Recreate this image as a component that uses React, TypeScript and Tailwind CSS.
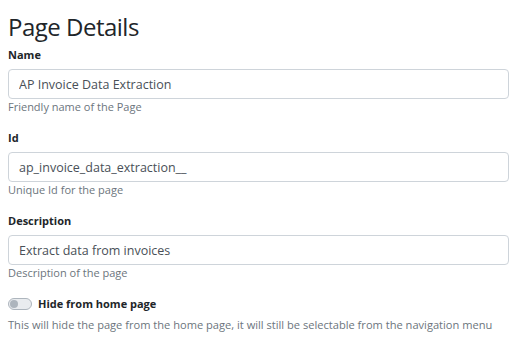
import { useState } from "react";

const FONT = "font-['Open_Sans','Noto_Sans',sans-serif]";

interface FieldProps {
  label: string;
  value: string;
  help: string;
}

function Field({ label, value, help }: FieldProps) {
  const [text, setText] = useState(value);
  return (
    <div className="mb-[15px]">
      <label className="mb-[6px] block text-[11px] leading-[16px] font-bold text-[#212529]">
        {label}
      </label>
      <input
        type="text"
        value={text}
        onChange={(e) => setText(e.target.value)}
        className="block h-[30px] w-full rounded-[4px] border border-[#ced4da] bg-white px-[10px] text-[12.5px] text-[#495057] outline-none"
      />
      <p className="text-[11px] leading-[16px] text-[#6c757d]">{help}</p>
    </div>
  );
}

export default function App() {
  const [hidden, setHidden] = useState(false);

  return (
    <div className={`${FONT} min-h-screen bg-white px-2 pt-[10px]`}>
      <h3 className="mb-[4px] text-[24px] leading-[33px] font-normal tracking-[-0.5px] text-[#212529]">
        Page Details
      </h3>

      <Field label="Name" value="AP Invoice Data Extraction" help="Friendly name of the Page" />
      <Field label="Id" value="ap_invoice_data_extraction__" help="Unique Id for the page" />
      <Field label="Description" value="Extract data from invoices" help="Description of the page" />

      <div className="flex items-center gap-[6px]">
        <button
          type="button"
          onClick={() => setHidden(!hidden)}
          className={`flex h-[12px] w-[24px] items-center rounded-full border px-[1px] ${
            hidden ? "justify-end border-[#0d6efd] bg-[#0d6efd]" : "justify-start border-[#adb5bd] bg-[#e9ecef]"
          }`}
        >
          <span className={`block h-[8px] w-[8px] rounded-full ${hidden ? "bg-white" : "bg-[#adb5bd]"}`} />
        </button>
        <span className="text-[11px] leading-[16px] font-bold text-[#212529]">Hide from home page</span>
      </div>
      <p className="mt-[5px] text-[11.1px] leading-[16px] text-[#6c757d]">
        This will hide the page from the home page, it will still be selectable from the navigation menu
      </p>
    </div>
  );
}
